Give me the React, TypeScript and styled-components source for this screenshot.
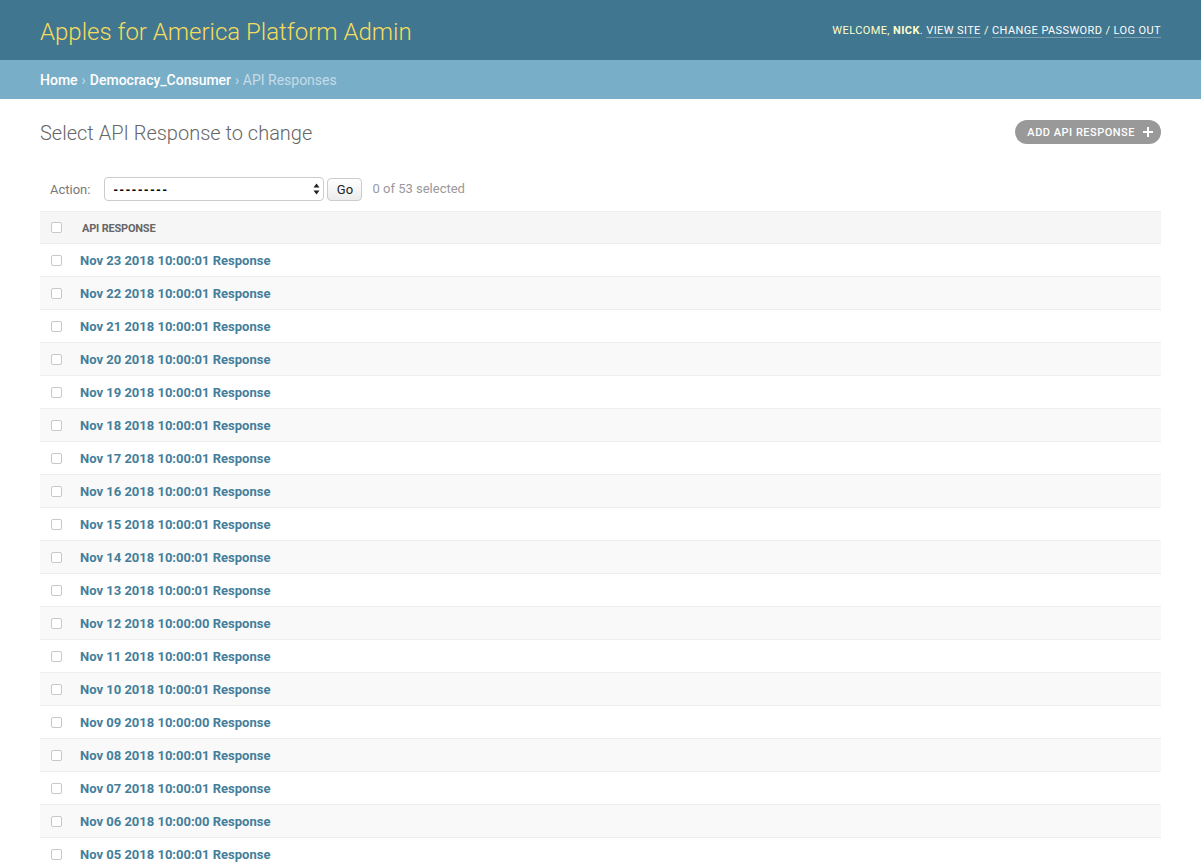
import styled, { createGlobalStyle } from 'styled-components';

const RESPONSES = [
  'Nov 23 2018 10:00:01',
  'Nov 22 2018 10:00:01',
  'Nov 21 2018 10:00:01',
  'Nov 20 2018 10:00:01',
  'Nov 19 2018 10:00:01',
  'Nov 18 2018 10:00:01',
  'Nov 17 2018 10:00:01',
  'Nov 16 2018 10:00:01',
  'Nov 15 2018 10:00:01',
  'Nov 14 2018 10:00:01',
  'Nov 13 2018 10:00:01',
  'Nov 12 2018 10:00:00',
  'Nov 11 2018 10:00:01',
  'Nov 10 2018 10:00:01',
  'Nov 09 2018 10:00:00',
  'Nov 08 2018 10:00:01',
  'Nov 07 2018 10:00:01',
  'Nov 06 2018 10:00:00',
  'Nov 05 2018 10:00:01',
] as const;

const GlobalStyle = createGlobalStyle`
  html, body {
    margin: 0;
    padding: 0;
    background: #fff;
  }
  body {
    font-family: Roboto, "Lucida Grande", "DejaVu Sans", sans-serif;
    font-size: 14px;
    color: #333;
  }
`;

export default function App() {
  return (
    <>
      <GlobalStyle />
      <Header>
        <Branding>Apples for America Platform Admin</Branding>
        <UserTools>
          Welcome, <strong>Nick</strong>. <ToolLink href="#">View site</ToolLink> /{' '}
          <ToolLink href="#">Change password</ToolLink> / <ToolLink href="#">Log out</ToolLink>
        </UserTools>
      </Header>

      <Breadcrumbs>
        <CrumbLink href="#">Home</CrumbLink> › <CrumbLink href="#">Democracy_Consumer</CrumbLink> › API Responses
      </Breadcrumbs>

      <Content>
        <TitleRow>
          <Title>Select API Response to change</Title>
          <AddButton href="#">
            Add API Response
            <svg width="10" height="10" viewBox="0 0 10 10">
              <path d="M4 0h2v4h4v2H6v4H4V6H0V4h4z" fill="#fff" />
            </svg>
          </AddButton>
        </TitleRow>

        <Actions>
          <ActionLabel>Action:</ActionLabel>
          <SelectWrap>
            <ActionSelect defaultValue="">
              <option value="">---------</option>
              <option value="delete">Delete selected API Responses</option>
            </ActionSelect>
            <SelectArrows width="7" height="12" viewBox="0 0 7 12">
              <path d="M3.5 0.5L6.5 4.5H0.5z M3.5 11.5L0.5 7.5H6.5z" fill="#222" />
            </SelectArrows>
          </SelectWrap>
          <GoButton type="button">Go</GoButton>
          <Counter>0 of 53 selected</Counter>
        </Actions>

        <ResultTable>
          <thead>
            <tr>
              <HeadCheck>
                <Check type="checkbox" />
              </HeadCheck>
              <HeadCell>Api Response</HeadCell>
            </tr>
          </thead>
          <tbody>
            {RESPONSES.map((stamp, i) => (
              <Row key={stamp} $alt={i % 2 === 1}>
                <CheckCell>
                  <Check type="checkbox" />
                </CheckCell>
                <NameCell>
                  <RowLink href="#">{stamp} Response</RowLink>
                </NameCell>
              </Row>
            ))}
          </tbody>
        </ResultTable>
      </Content>
    </>
  );
}

const Header = styled.div`
  height: 60px;
  box-sizing: border-box;
  padding: 0 40px;
  background: #417690;
  display: flex;
  align-items: center;
  justify-content: space-between;
`;

const Branding = styled.h1`
  margin: 0;
  font-size: 24px;
  font-weight: 300;
  color: #f5dd5d;
  padding-top: 3px;
`;

const UserTools = styled.div`
  font-size: 11px;
  letter-spacing: 0.4px;
  text-transform: uppercase;
  color: #ffc;
  font-weight: 400;

  strong {
    font-weight: 700;
  }
`;

const ToolLink = styled.a`
  color: #fff;
  text-decoration: none;
  border-bottom: 1px solid rgba(255, 255, 255, 0.3);
`;

const Breadcrumbs = styled.div`
  height: 39px;
  box-sizing: border-box;
  padding: 0 40px;
  display: flex;
  align-items: center;
  gap: 4px;
  background: #79aec8;
  color: #c4dce8;
  font-size: 14px;
`;

const CrumbLink = styled.a`
  color: #fff;
  font-weight: 500;
  text-decoration: none;
`;

const Content = styled.div`
  padding: 20px 40px;
`;

const TitleRow = styled.div`
  display: flex;
  align-items: flex-start;
  justify-content: space-between;
  margin-bottom: 20px;
`;

const Title = styled.h1`
  margin: 0;
  padding-top: 1px;
  padding-bottom: 1px;
  font-size: 20px;
  line-height: 26px;
  font-weight: 300;
  color: #666;
`;

const AddButton = styled.a`
  margin-top: 1px;
  height: 24px;
  box-sizing: border-box;
  display: flex;
  align-items: center;
  gap: 8px;
  padding: 0 8px 0 12px;
  border-radius: 12px;
  background: #999;
  color: #fff;
  font-size: 11px;
  font-weight: 500;
  letter-spacing: 0.5px;
  text-transform: uppercase;
  text-decoration: none;
`;

const Actions = styled.div`
  display: flex;
  align-items: center;
  padding: 10px;
  height: 44px;
  box-sizing: border-box;
  color: #999;
  font-size: 13px;
`;

const ActionLabel = styled.span`
  color: #777;
`;

const SelectWrap = styled.div`
  position: relative;
  margin-left: 14px;
`;

const ActionSelect = styled.select`
  appearance: none;
  width: 220px;
  height: 24px;
  box-sizing: border-box;
  border: 1px solid #ccc;
  border-radius: 4px;
  background: #fff;
  color: #000;
  font-family: "Liberation Sans", Arial, sans-serif;
  font-size: 13px;
  font-weight: 700;
  letter-spacing: 1.8px;
  padding: 0 0 0 8px;
  margin: 0;
`;

const SelectArrows = styled.svg`
  position: absolute;
  right: 4px;
  top: 6px;
  pointer-events: none;
`;

const GoButton = styled.button`
  margin-left: 3px;
  height: 23px;
  width: 35px;
  box-sizing: border-box;
  border: 1px solid #ccc;
  border-radius: 4px;
  background: linear-gradient(#fff, #ececec);
  font-family: inherit;
  font-size: 13px;
  font-weight: 400;
  color: #222;
  padding: 0;
`;

const Counter = styled.span`
  margin-left: 10px;
  color: #999;
  font-size: 13px;
  padding-bottom: 2px;
`;

const ResultTable = styled.table`
  width: 100%;
  border-collapse: collapse;
`;

const HeadCheck = styled.th`
  width: 30px;
  height: 31px;
  padding: 0 0 0 10px;
  background: #f6f6f6;
  border-top: 1px solid #eee;
  border-bottom: 1px solid #eee;
  text-align: left;
`;

const HeadCell = styled.th`
  padding: 1px 0 0 2px;
  background: #f6f6f6;
  border-top: 1px solid #eee;
  border-bottom: 1px solid #eee;
  text-align: left;
  font-size: 11px;
  font-weight: 700;
  color: #666;
  text-transform: uppercase;
  letter-spacing: -0.2px;
`;

const Row = styled.tr<{ $alt: boolean }>`
  background: ${(p) => (p.$alt ? '#f9f9f9' : '#fff')};
`;

const CheckCell = styled.td`
  height: 32px;
  padding: 0 0 0 10px;
  border-bottom: 1px solid #eee;
`;

const NameCell = styled.td`
  padding: 0;
  border-bottom: 1px solid #eee;
`;

const Check = styled.input`
  appearance: none;
  display: block;
  margin: 0 0 0 1px;
  width: 11px;
  height: 11px;
  box-sizing: border-box;
  border: 1px solid #c8c8c8;
  border-radius: 2px;
  background: #fff;
`;

const RowLink = styled.a`
  color: #447e9b;
  font-weight: 700;
  font-size: 13px;
  text-decoration: none;
`;
